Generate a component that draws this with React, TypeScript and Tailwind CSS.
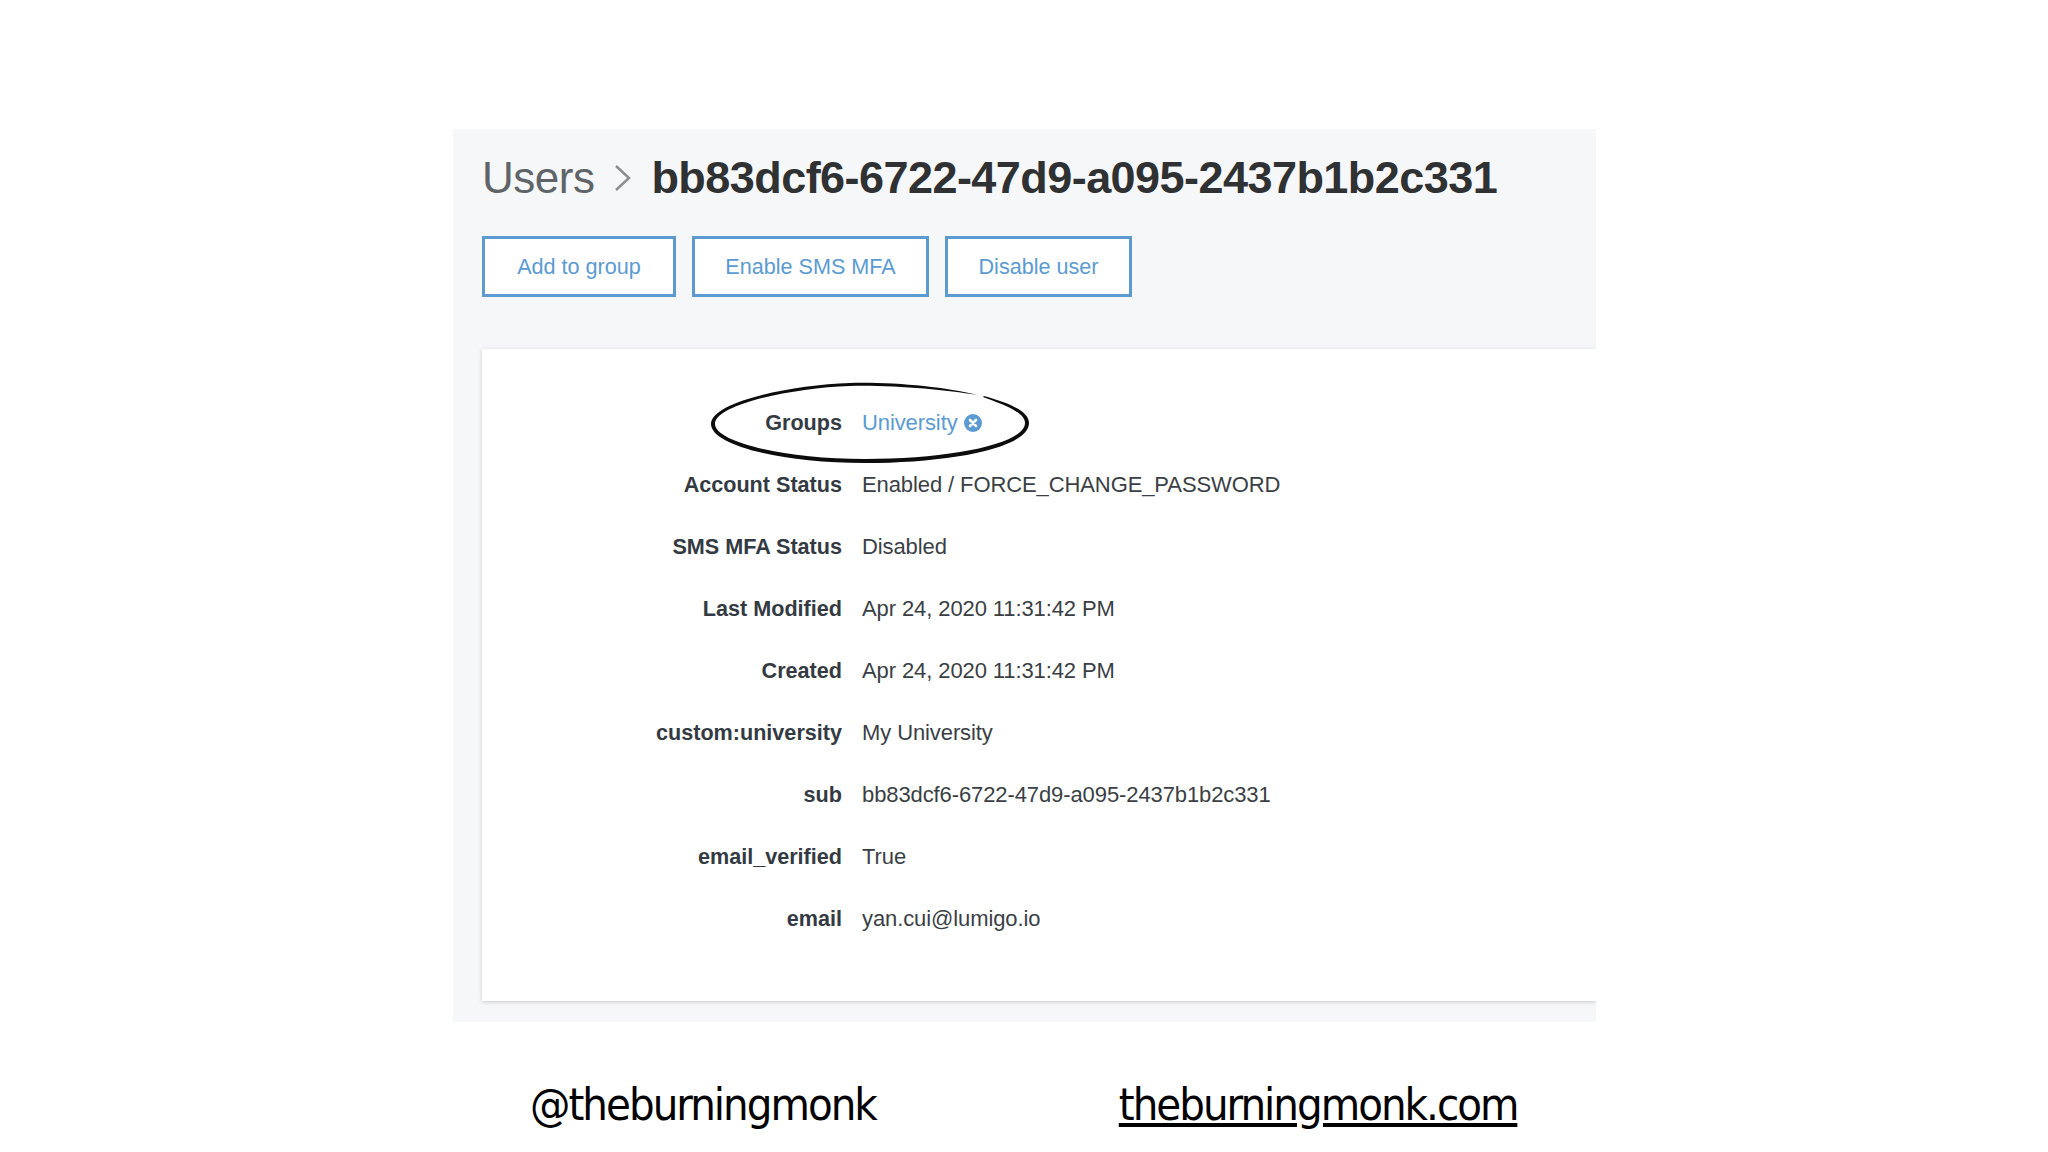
import React from 'react'

const rows = [
  { label: 'Account Status', value: 'Enabled / FORCE_CHANGE_PASSWORD' },
  { label: 'SMS MFA Status', value: 'Disabled' },
  { label: 'Last Modified', value: 'Apr 24, 2020 11:31:42 PM' },
  { label: 'Created', value: 'Apr 24, 2020 11:31:42 PM' },
  { label: 'custom:university', value: 'My University' },
  { label: 'sub', value: 'bb83dcf6-6722-47d9-a095-2437b1b2c331' },
  { label: 'email_verified', value: 'True' },
  { label: 'email', value: 'yan.cui@lumigo.io' },
]

function Row({ label, children }: { label: string; children: React.ReactNode }) {
  return (
    <div className="flex h-[62px] items-center leading-none">
      <div className="w-[380px] pr-[20px] text-right text-[21.6px] font-bold text-[#333a42]">
        {label}
      </div>
      <div className="flex items-center text-[22px] tracking-[-0.1px] text-[#3a3f45]">{children}</div>
    </div>
  )
}

function ActionButton({ width, children }: { width: string; children: React.ReactNode }) {
  return (
    <button className={`h-[61px] ${width} border-[3px] border-[#5b9bd1] bg-white pt-[2px] text-[21.6px] text-[#5b9bd1]`}>
      {children}
    </button>
  )
}

export default function App() {
  return (
    <div className="flex h-[1152px] w-[2048px] flex-col overflow-hidden bg-white pl-[453px] pt-[129px] font-['Liberation_Sans',sans-serif]">
      <div className="h-[893px] w-[1143px] overflow-hidden bg-[#f6f7f9] pl-[29px]">
        <div className="flex h-[107px] items-center pb-[10px] leading-none">
          <span className="text-[44px] tracking-[-0.5px] text-[#5f6468]">Users</span>
          <svg width="20" height="30" viewBox="0 0 20 30" className="ml-[19px] mr-[18px]">
            <path d="M3 3 L16 15 L3 27" fill="none" stroke="#8a8e92" strokeWidth="2.5" />
          </svg>
          <span className="text-[45px] font-bold tracking-[-0.55px] text-[#2f3133]">bb83dcf6-6722-47d9-a095-2437b1b2c331</span>
        </div>
        <div className="flex gap-[16px]">
          <ActionButton width="w-[194px]">Add to group</ActionButton>
          <ActionButton width="w-[237px]">Enable SMS MFA</ActionButton>
          <ActionButton width="w-[187px]">Disable user</ActionButton>
        </div>
        <div className="mt-[52px] h-[652px] bg-white pt-[43px] shadow-[0_1px_4px_rgba(0,0,0,0.18)]">
          <div className="relative">
            <Row label="Groups">
              <span className="text-[#5b9bd1]">University</span>
              <svg width="18" height="18" viewBox="0 0 18 18" className="ml-[6px]">
                <circle cx="9" cy="9" r="9" fill="#5b9bd1" />
                <path d="M6 6 L12 12 M12 6 L6 12" stroke="#fff" strokeWidth="2.6" strokeLinecap="round" />
              </svg>
            </Row>
            {/* hand drawn circle round the groups row */}
            <svg
              width="400"
              height="150"
              viewBox="0 0 400 150"
              className="absolute left-[198px] top-[-32px]"
            >
              <path
                d="M297 35 C265 27 215 22 170 23 C110 25 31 42 31 64 C31 85 100 103 185 103 C270 103 349 88 349 63 C349 50 325 42 304 36 L303 37 C322 44 345 52 345 63 C345 84 270 99 185 99 C105 99 35 82 35 64 C35 45 110 28 170 26 C215 25 265 30 297 35 Z"
                fill="#0c0c0c"
              />
            </svg>
            {rows.map((r) => (
              <Row key={r.label} label={r.label}>
                {r.value}
              </Row>
            ))}
          </div>
        </div>
      </div>
      <div className="mt-[60px] flex items-center font-['DejaVu_Sans',sans-serif] text-[45px] leading-none tracking-[-2px] text-black [font-stretch:condensed]">
        <span className="ml-[77px]">@theburningmonk</span>
        <a className="ml-[243px] underline">theburningmonk.com</a>
      </div>
    </div>
  )
}
